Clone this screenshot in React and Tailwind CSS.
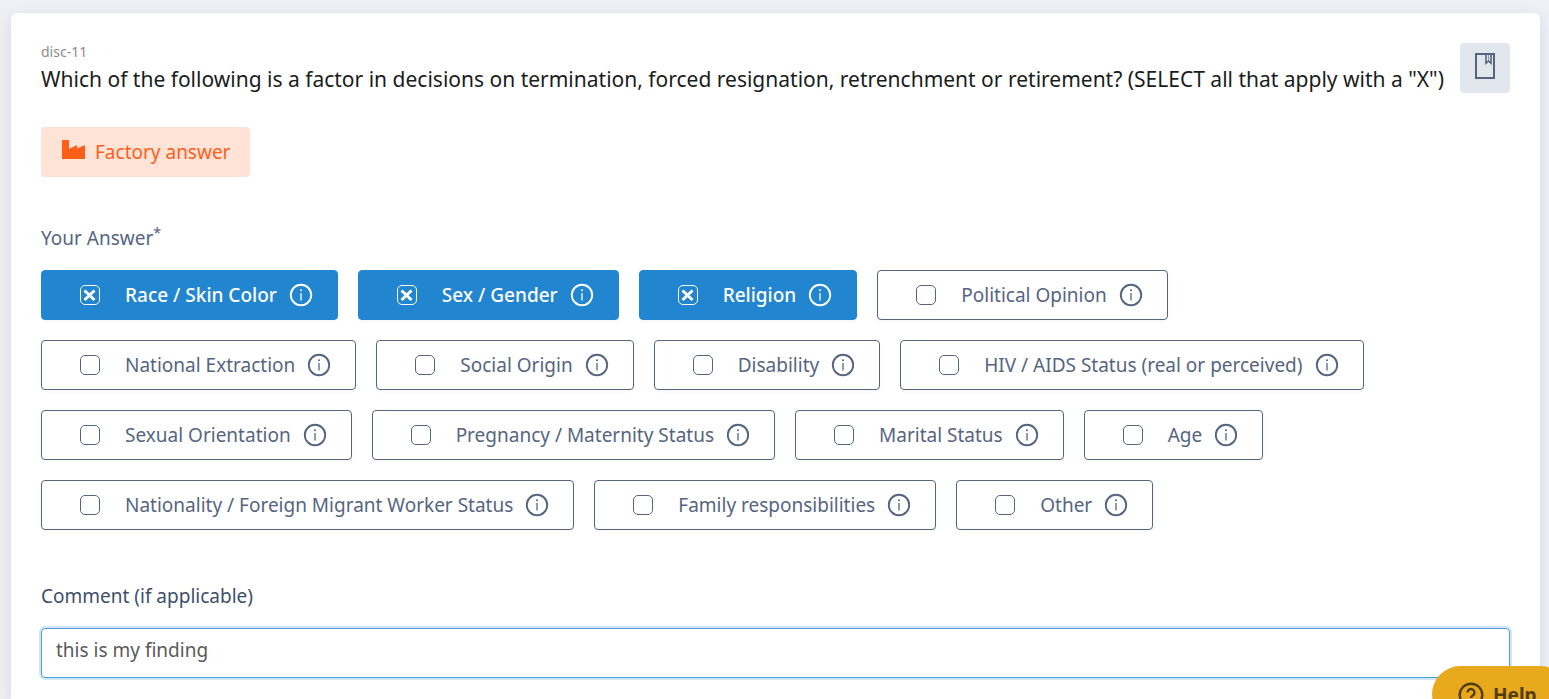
import { useState } from 'react';

const OPTIONS = [
  'Race / Skin Color',
  'Sex / Gender',
  'Religion',
  'Political Opinion',
  'National Extraction',
  'Social Origin',
  'Disability',
  'HIV / AIDS Status (real or perceived)',
  'Sexual Orientation',
  'Pregnancy / Maternity Status',
  'Marital Status',
  'Age',
  'Nationality / Foreign Migrant Worker Status',
  'Family responsibilities',
  'Other',
];

function FactoryIcon() {
  return (
    <svg viewBox="0 0 24 24" className="w-6 h-6" fill="currentColor" aria-hidden="true">
      <path d="M1 0h7v9l8-4v3.5L24 5v14H1z" />
    </svg>
  );
}

function BookmarkIcon() {
  return (
    <svg viewBox="0 0 20 26" className="w-5 h-[26px]" fill="none" stroke="currentColor" aria-hidden="true">
      <path d="M1 1h18v24H1z" strokeWidth="2" />
      <path d="M11 1v9.3l2.5-2.3 2.5 2.3V1" strokeWidth="1.6" />
      <path d="M13.5 1v7" strokeWidth="0.6" />
    </svg>
  );
}

function InfoIcon() {
  return (
    <svg viewBox="0 0 24 24" className="w-6 h-6" fill="none" stroke="currentColor" aria-hidden="true">
      <circle cx="12" cy="12" r="10.2" strokeWidth="1.9" />
      <path d="M12 10v7.5" strokeWidth="1.3" />
      <circle cx="12" cy="7.3" r="1" fill="currentColor" stroke="none" />
    </svg>
  );
}

function Option({ label, checked, onChange }) {
  return (
    <label
      className={`flex items-center h-[50px] pl-[38px] pr-6 mr-5 mb-5 rounded border cursor-pointer shadow-[0_2px_4px_rgba(0,0,0,0.03)] ${
        checked ? 'bg-[#2185d0] border-[#2185d0] text-white font-medium' : 'bg-white border-[#56657f] text-[#56657f]'
      }`}
    >
      <span className="grid place-items-center w-5 h-5">
        <input
          type="checkbox"
          checked={checked}
          onChange={onChange}
          className="appearance-none w-5 h-5 border border-current rounded-[5px] [grid-area:1/1]"
        />
        {checked && (
          <svg viewBox="0 0 20 20" className="w-5 h-5 pointer-events-none [grid-area:1/1]" stroke="currentColor" aria-hidden="true">
            <path d="M4.5 5.5l10 9.5M14.5 5.5l-10 9.5" strokeWidth="3" />
          </svg>
        )}
      </span>
      <span className="ml-[25px] mr-3">{label}</span>
      <InfoIcon />
    </label>
  );
}

export default function App() {
  const [selected, setSelected] = useState(['Race / Skin Color', 'Sex / Gender', 'Religion']);
  const [comment, setComment] = useState('this is my finding');

  const toggle = (label) => {
    setSelected(
      selected.includes(label) ? selected.filter((item) => item !== label) : [...selected, label]
    );
  };

  return (
    <div className="flex flex-col min-h-screen pt-[13px] pl-[11px] pr-[9px] bg-[#eff0f5] font-['Noto_Sans',sans-serif] text-[19px] leading-6 text-[#56657f]">
      <main className="flex-1 rounded-t-md bg-white px-[30px] pt-[30px] pb-5 shadow-[0_4px_16px_rgba(0,0,0,0.1)]">
        <div className="flex items-start justify-between">
          <div>
            <div className="text-sm leading-[18px] text-[#8c8c8c]">disc-11</div>
            <h1 className="text-[21px] leading-9 text-[#1b1c1d]">
              Which of the following is a factor in decisions on termination, forced resignation, retrenchment or retirement? (SELECT all that apply with a "X")
            </h1>
          </div>
          <button type="button" aria-label="Bookmark question" className="flex justify-center shrink-0 w-[50px] h-[50px] pt-[10px] rounded bg-[#e2e7ee]">
            <BookmarkIcon />
          </button>
        </div>

        <button type="button" className="flex items-center gap-[10px] h-[50px] mt-[30px] px-5 rounded bg-[#ffe3d6] text-[#ff5e1a]">
          <FactoryIcon />
          Factory answer
        </button>

        <fieldset className="mt-[49px]">
          <legend className="mb-5">Your Answer<sup>*</sup></legend>
          <div className="flex flex-wrap">
            {OPTIONS.map((label) => (
              <Option
                key={label}
                label={label}
                checked={selected.includes(label)}
                onChange={() => toggle(label)}
              />
            ))}
          </div>
        </fieldset>

        <label htmlFor="comment" className="block mt-[34px] mb-5 text-[#3d4f6b]">Comment (if applicable)</label>
        <textarea
          id="comment"
          rows={1}
          value={comment}
          onChange={(e) => setComment(e.target.value)}
          className="block w-full h-[50px] px-[14px] py-[9px] rounded border border-[#4a9fdc] outline-none text-[#5a5a5a] shadow-[0_0_0_2px_#d2e7f6]"
        />
      </main>

      <button type="button" className="fixed -right-5 -bottom-6 flex items-center gap-[9px] h-[57px] w-[137px] pl-[26px] rounded-full bg-[#e8aa1c] text-[#523d0d] font-bold">
        <svg viewBox="0 0 26 26" className="w-[26px] h-[26px]" fill="none" stroke="currentColor" strokeWidth="2.4" aria-hidden="true">
          <circle cx="13" cy="13" r="11.3" />
          <path d="M9.5 10.5a3.5 3.5 0 1 1 5.3 3c-1.2.7-1.8 1.2-1.8 2.5M13 18v2.4" />
        </svg>
        Help
      </button>
    </div>
  );
}
